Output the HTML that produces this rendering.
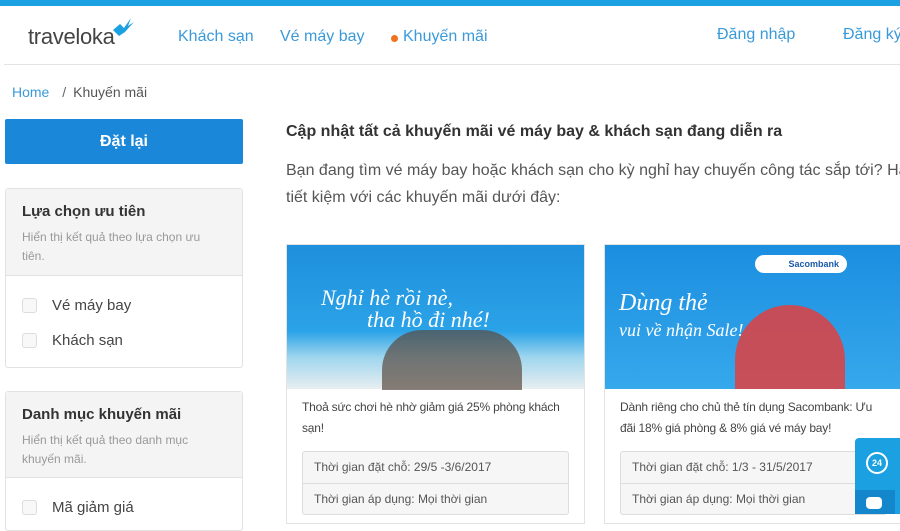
<!DOCTYPE html>
<html><head><meta charset="utf-8"><style>
*{box-sizing:border-box;margin:0;padding:0}
body{width:900px;height:514px;overflow:hidden;background:#fff;font-family:"Liberation Sans","DejaVu Sans",sans-serif;color:#333;position:relative}
.abs{position:absolute;white-space:nowrap}
.nav{color:#3a9ad9;font-size:16px;top:28px}
.box{position:absolute;left:5px;width:238px;border:1px solid #e2e2e2;border-radius:3px;background:#fff}
.box .hd{background:#f4f4f4;padding:14px 16px 0 16px;border-bottom:1px solid #e2e2e2}
.box h3{font-size:15px;font-weight:bold;color:#333}
.box p{font-size:12px;color:#999;line-height:19px;margin-top:8px}
.cb{display:flex;align-items:center;font-size:15px;color:#444;height:35px;padding-left:16px}
.cb span{width:15px;height:15px;border:1px solid #ddd;border-radius:3px;background:#f8f8f8;margin-right:15px}
.card{position:absolute;top:244px;width:299px;height:280px;border:1px solid #e3e3e3;background:#fff}
.card .img{height:144px}
.card .t{font-size:12px;letter-spacing:-0.2px;color:#444;line-height:21px;padding:8px 15px 0 15px;height:62px}
.card .tb{margin:0 15px;border:1px solid #ddd;border-radius:3px;background:#f6f6f6}
.card .tb div{font-size:12px;color:#555;height:31px;line-height:31px;padding-left:11px}
.card .tb div+div{border-top:1px solid #ddd}
</style></head><body>
<div class="abs" style="left:0;top:0;width:900px;height:6px;background:#1ba0e2"></div>
<div class="abs" style="left:28px;top:24px;font-size:22px;color:#444;letter-spacing:-0.3px">traveloka</div>
<svg class="abs" style="left:111px;top:16px" width="24" height="22" viewBox="0 0 24 22"><path d="M2 14 L9 8 L13 12 L20 2 L17 10 L23 6 L14 16 L8 20 Z" fill="#1ba0e2"/></svg>
<div class="abs nav" style="left:178px">Khách sạn</div>
<div class="abs nav" style="left:280px">Vé máy bay</div>
<div class="abs" style="left:391px;top:35px;width:7px;height:7px;border-radius:50%;background:#f2711c"></div>
<div class="abs nav" style="left:403px">Khuyến mãi</div>
<div class="abs nav" style="left:717px;top:26px">Đăng nhập</div>
<div class="abs nav" style="left:843px;top:26px">Đăng ký</div>
<div class="abs" style="left:4px;top:64px;width:896px;height:1px;background:#e3e3e3"></div>
<div class="abs" style="left:12px;top:84px;font-size:14px;color:#3a9ad9">Home <span style="color:#666;margin:0 7px 0 9px">/</span><span style="color:#555">Khuyến mãi</span></div>
<div class="abs" style="left:5px;top:119px;width:238px;height:45px;background:#1a87d8;border-radius:2px;color:#fff;font-weight:bold;font-size:16px;text-align:center;line-height:45px">Đặt lại</div>
<div class="box" style="top:188px;height:180px"><div class="hd" style="height:87px"><h3>Lựa chọn ưu tiên</h3><p>Hiển thị kết quả theo lựa chọn ưu tiên.</p></div>
<div style="padding-top:12px"><div class="cb"><span></span>Vé máy bay</div><div class="cb"><span></span>Khách sạn</div></div></div>
<div class="box" style="top:391px;height:140px"><div class="hd" style="height:86px"><h3>Danh mục khuyến mãi</h3><p>Hiển thị kết quả theo danh mục khuyến mãi.</p></div>
<div style="padding-top:12px"><div class="cb"><span></span>Mã giảm giá</div></div></div>
<div class="abs" style="left:286px;top:123px;font-size:16px;font-weight:bold;color:#333">Cập nhật tất cả khuyến mãi vé máy bay &amp; khách sạn đang diễn ra</div>
<div class="abs" style="left:286px;top:157px;width:640px;font-size:16px;color:#555;line-height:27px;white-space:normal">Bạn đang tìm vé máy bay hoặc khách sạn cho kỳ nghỉ hay chuyến công tác sắp tới? Hãy tiết kiệm với các khuyến mãi dưới đây:</div>
<div class="card" style="left:286px"><div class="img" style="background:linear-gradient(180deg,#1e8fdc 0%,#2ba3e8 60%,#9fd6ee 78%,#e8eef0 100%);position:relative">
<div class="abs" style="left:34px;top:40px;color:#fff;font-style:italic;font-size:22px;font-family:'Liberation Serif',serif">Nghỉ hè rồi nè,</div>
<div class="abs" style="left:80px;top:62px;color:#fff;font-style:italic;font-size:22px;font-family:'Liberation Serif',serif">tha hồ đi nhé!</div>
<div class="abs" style="left:95px;top:85px;width:140px;height:60px;background:#5a4a40;border-radius:40px 40px 0 0;opacity:.7"></div></div>
<div class="t">Thoả sức chơi hè nhờ giảm giá 25% phòng khách sạn!</div>
<div class="tb"><div>Thời gian đặt chỗ: 29/5 -3/6/2017</div><div>Thời gian áp dụng: Mọi thời gian</div></div></div>
<div class="card" style="left:604px"><div class="img" style="background:linear-gradient(180deg,#1b8ee0,#36a8ec);position:relative">
<div class="abs" style="left:150px;top:10px;width:92px;height:18px;background:#fff;border-radius:9px;color:#1a5aa8;font-size:9px;font-weight:bold;line-height:18px;text-align:right;padding-right:8px">Sacombank</div>
<div class="abs" style="left:14px;top:45px;color:#fff;font-style:italic;font-size:24px;font-family:'Liberation Serif',serif">Dùng thẻ</div>
<div class="abs" style="left:14px;top:75px;color:#fff;font-style:italic;font-size:18px;font-family:'Liberation Serif',serif">vui về nhận Sale!</div>
<div class="abs" style="left:130px;top:60px;width:110px;height:84px;background:#e04040;border-radius:55px 55px 0 0;opacity:.85"></div></div>
<div class="t">Dành riêng cho chủ thẻ tín dụng Sacombank: Ưu đãi 18% giá phòng &amp; 8% giá vé máy bay!</div>
<div class="tb"><div>Thời gian đặt chỗ: 1/3 - 31/5/2017</div><div>Thời gian áp dụng: Mọi thời gian</div></div></div>
<div class="abs" style="left:855px;top:438px;width:45px;height:76px;background:#1ba0e2;border-radius:4px 0 0 0"></div>
<div class="abs" style="left:866px;top:452px;width:22px;height:22px;border:2px solid #fff;border-radius:50%;color:#fff;font-size:9px;font-weight:bold;text-align:center;line-height:18px">24</div>
<div class="abs" style="left:855px;top:490px;width:40px;height:24px;background:#1487cc"></div>
<div class="abs" style="left:866px;top:497px;width:16px;height:12px;background:#fff;border-radius:4px"></div>
</body></html>
